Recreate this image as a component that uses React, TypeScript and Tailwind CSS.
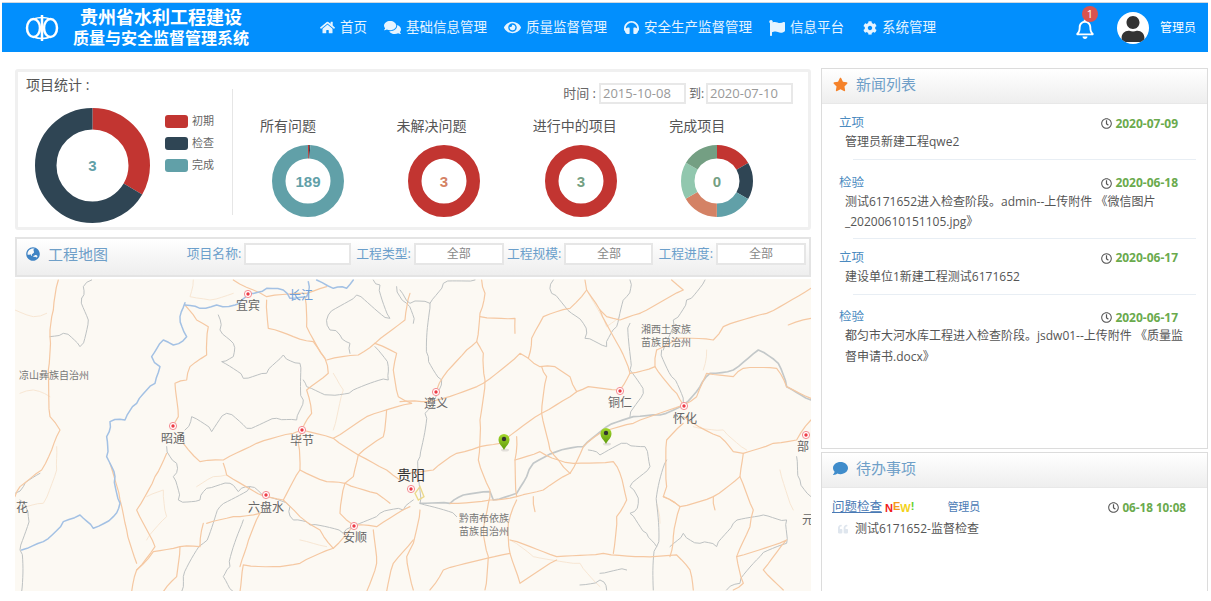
import { FaHome, FaComments, FaEye, FaHeadphones, FaFlag, FaCog, FaRegBell, FaUser, FaStar, FaGlobeAsia, FaComment, FaRegClock, FaQuoteLeft } from 'react-icons/fa';

const C = { red: '#c23531', dark: '#2f4554', teal: '#61a0a8', orange: '#d48265', green: '#91c7ae', moss: '#749f83' };

function Donut({ segments, label, labelColor, size, outer, inner }: { segments: { v: number; c: string }[]; label: string; labelColor: string; size: number; outer: number; inner: number }) {
  const r = (outer + inner) / 2;
  const len = 2 * Math.PI * r;
  const total = segments.reduce((a, s) => a + s.v, 0);
  let acc = 0;
  const c = size / 2;
  return (
    <svg width={size} height={size} viewBox={`0 0 ${size} ${size}`} className="block">
      <g transform={`rotate(-90 ${c} ${c})`}>
        {segments.map((s, i) => {
          const d = (s.v / total) * len;
          const el = <circle key={i} cx={c} cy={c} r={r} fill="none" stroke={s.c} strokeWidth={outer - inner} strokeDasharray={`${d} ${len - d}`} strokeDashoffset={-acc} />;
          acc += d;
          return el;
        })}
      </g>
      <text x={c} y={c + 5.5} textAnchor="middle" fontSize={15} fontWeight="bold" fill={labelColor} fontFamily="'Liberation Sans',sans-serif">{label}</text>
    </svg>
  );
}

const six = [C.red, C.dark, C.teal, C.orange, C.green, C.moss].map((c) => ({ v: 1, c }));
const stats = [
  { title: '所有问题', label: '189', color: C.teal, segs: [{ v: 1, c: C.red }, { v: 1, c: C.dark }, { v: 187, c: C.teal }] },
  { title: '未解决问题', label: '3', color: C.orange, segs: [{ v: 1, c: C.red }] },
  { title: '进行中的项目', label: '3', color: C.moss, segs: [{ v: 1, c: C.red }] },
  { title: '完成项目', label: '0', color: C.moss, segs: six },
];

const legend = [
  { t: '初期', c: 'bg-[#c23531]' },
  { t: '检查', c: 'bg-[#2f4554]' },
  { t: '完成', c: 'bg-[#61a0a8]' },
];

const navs = [
  { icon: <FaHome size={15} />, text: '首页' },
  { icon: <FaComments size={17} />, text: '基础信息管理' },
  { icon: <FaEye size={17} />, text: '质量监督管理' },
  { icon: <FaHeadphones size={15} />, text: '安全生产监督管理' },
  { icon: <FaFlag size={16} />, text: '信息平台' },
  { icon: <FaCog size={14} />, text: '系统管理' },
];

const news = [
  { tag: '立项', date: '2020-07-09', text: '管理员新建工程qwe2', cls: 'pt-[10px] pb-[6px]' },
  { tag: '检验', date: '2020-06-18', text: '测试6171652进入检查阶段。admin--上传附件 《微信图片_20200610151105.jpg》', cls: 'pt-[14px] pb-[5px]' },
  { tag: '立项', date: '2020-06-17', text: '建设单位1新建工程测试6171652', cls: 'pt-[10px] pb-[7px]' },
  { tag: '检验', date: '2020-06-17', text: '都匀市大河水库工程进入检查阶段。jsdw01--上传附件 《质量监督申请书.docx》', cls: 'pt-[13px] pb-[6px]' },
];

// map lines are traced in the coordinates of the two crops (3x)
const leftRoads = [
  '175,150 160,240 150,320 145,420 150,560 180,600 155,660 125,720 60,770 45,800',
  '555,225 590,270 625,290 620,375 570,410 560,450 525,460 535,560 520,585',
  '500,670 465,740 410,840 465,950 410,1020 395,1085',
  '330,700 360,810 380,900 410,1000',
  '800,210 805,295 880,320 940,335 975,385 985,430 920,480 935,550 905,600',
  '915,200 920,290 975,385',
  '700,150 760,180 800,200 920,190 980,170',
  '1125,340 1075,375 980,390',
  '1125,340 1215,270 1230,190',
  '1125,340 1190,370 1180,420 1195,500 1235,520',
  '550,640 600,695 670,690 770,640 880,610 905,600 1000,625 1075,675 1160,720 1200,750',
  '1000,625 1100,560 1235,520',
  '1160,540 1150,620 1075,675 1060,740 1035,760 1020,850 1060,885',
  '1035,760 1130,790 1170,820',
  '670,700 680,735 795,800 850,810 900,720 895,640 905,600',
  '900,720 980,755 1035,760',
  '850,810 900,860 960,900 1000,955 900,1000 820,1010 730,1005 720,1085',
  '780,850 740,950 720,1010',
  '620,880 700,860 780,850',
  '610,880 600,950 540,950 460,965 410,1020',
  '540,950 530,1040 490,1085',
  '1240,930 1180,1000 1160,1085',
  '1000,955 1060,885 1130,890 1230,830',
  '1120,900 1130,1000 1100,1085',
];
const leftPale = [
  '45,240 100,260 140,250', '60,490 100,480 150,500', '170,650 170,720 130,820 80,830',
  '580,150 570,200 630,210 700,190', '590,770 640,740 680,735', '1000,430 1030,480 1000,600',
  '440,800 490,780 500,860 440,930', '900,930 980,950',
];
const leftGray = [
  '655,255 660,300 700,340 700,380 665,395 730,445 800,430 850,375 900,400 910,510 890,570 830,565 740,595 680,550 635,605 575,560 555,600',
  '910,450 920,470 990,495 1060,480 1165,450 1165,410 1125,350',
  '1050,370 1050,340 1020,315 990,300 985,255 1070,195 1170,265 1140,165 1120,150',
  '1190,170 1220,220 1240,280',
  '245,205 265,270 240,350 190,310 150,320',
  '245,205 250,170 275,150',
  '500,650 530,700 520,740 535,810 600,810 620,775 690,760 715,785 750,770 790,800 870,830 880,870 930,885 1030,910 1140,850 1210,840 1240,810',
  '45,790 70,770 120,730',
  '60,810 85,860 60,960 65,1085',
  '750,770 660,830 610,940 550,1040 545,1085',
  '730,870 690,1010 670,1040 700,1085',
];
const leftBlue = [
  '555,218 540,260 560,320 520,345 490,330 455,380 480,410 465,460 410,520 375,570 330,575 320,620 320,680 345,740 360,820 340,860 280,895 240,855 190,875 130,935 65,960',
  '555,225 600,235 650,225 705,225 725,210 745,190 800,175 850,180 870,205 920,200 925,155',
  '950,150 1000,175 1040,175 1060,150',
];
const rightRoads = [
  '245,30 255,70 240,130 230,215 250,250 255,330 240,450 235,570 270,660 265,700 250,780 265,860 255,960',
  '240,140 345,145 345,190',
  '0,395 65,395 130,385 250,340 360,250 385,265 420,290 465,290 510,320 530,365 565,350 660,360 690,310 765,290 830,370 850,405',
  '230,215 200,240 130,320 110,360',
  '385,265 395,205 430,140 510,115 560,60 555,30',
  '560,60 600,120 660,235 690,310',
  '425,290 440,320 425,430 450,540 475,570 510,610',
  '0,610 100,600 170,550 240,530 300,520 425,430 510,380 530,365',
  '350,500 345,570 350,680',
  '345,570 420,545 475,570 520,580 640,575 660,610 680,690 650,740 640,850',
  '510,610 550,530 600,490 700,460 850,405',
  '510,610 430,660 350,680 270,690 150,700',
  '350,690 325,760 330,850 260,865 130,900 90,960',
  '330,810 470,860 610,850 730,860 830,855 870,900 880,960',
  '330,850 360,940 470,870',
  '60,720 40,820 20,860 40,960',
  '720,130 850,60 815,30',
  '720,130 660,150 620,140 600,120',
  '770,240 765,290',
  '770,240 830,205 940,210 970,170 1100,130 1233,55',
  '1165,165 1233,145',
  '850,405 890,380 920,310 1000,320 1030,295 1130,295 1160,350 1233,385',
  '850,460 800,510 800,650 790,680 840,710 820,800 810,860',
  '790,680 840,710 940,680 1020,620 1030,550 1000,545 960,500 880,460 850,440',
  '1030,550 1120,520 1190,510 1233,450',
  '1020,620 1060,720 1050,770 1010,860 1030,940 1000,960',
  '940,680 945,720',
  '1010,860 1160,810 1090,900 1150,960',
  '400,680 405,725',
];
const rightPale = [
  '560,60 620,170 660,140', '330,810 400,860 540,880 600,950', '1140,600 1180,720', '920,240 910,300',
  '770,700 780,760', '880,470 970,480 1040,540',
];
const rightMainRiver = '60,700 150,700 190,675 270,665 280,690 350,670 380,620 400,580 470,545 550,530 620,470 700,440 780,435 850,405 900,350 930,310 1000,300 1075,240 1135,280 1160,350 1233,390';
const rightGray = [
  '90,100 85,260 125,330 75,430 60,560 60,700 170,740',
  '785,240 815,320 850,400',
  '915,30 860,90 820,150 790,240',
  '690,30 680,80 650,170 620,230 555,205 550,160 515,130 455,70 460,30',
  '690,160 690,300 730,370 690,440',
  '565,540 600,555 680,520 735,530 750,590 690,650 715,700 690,730 740,790 770,830 760,960',
  '770,830 770,700 800,570',
  '810,830 850,790 900,820 950,830 1000,760 1090,735 1160,750 1160,820 1080,860 1020,940 980,960',
  '1190,560 1200,630 1233,680',
  '0,60 30,100 90,100 130,40 225,30',
  '600,910 680,900',
  '540,945 600,930 620,960',
];
const cities = [
  [248, 294], [173, 426], [302, 430], [266, 495], [354, 526], [411, 489], [436, 392], [620, 391], [684, 406], [806, 435],
];
const labels = [
  { t: '长江', c: 'left-[286px] top-[17px] text-[12px] text-[#6f9fd8]' },
  { t: '宜宾', c: 'left-[233px] top-[27px] text-[12px] text-[#666]' },
  { t: '凉山彝族自治州', c: 'left-[39px] top-[96px] text-[10px] text-[#777]' },
  { t: '昭通', c: 'left-[158px] top-[160px] text-[12px] text-[#666]' },
  { t: '毕节', c: 'left-[287px] top-[162px] text-[12px] text-[#666]' },
  { t: '六盘水', c: 'left-[251px] top-[229px] text-[12px] text-[#666]' },
  { t: '安顺', c: 'left-[340px] top-[259px] text-[12px] text-[#666]' },
  { t: '花', c: 'left-[7px] top-[229px] text-[12px] text-[#666]' },
  { t: '贵阳', c: 'left-[396px] top-[196px] text-[14px] text-[#333]' },
  { t: '遵义', c: 'left-[421px] top-[125px] text-[12px] text-[#666]' },
  { t: '铜仁', c: 'left-[605px] top-[124px] text-[12px] text-[#666]' },
  { t: '怀化', c: 'left-[670px] top-[140px] text-[12px] text-[#666]' },
  { t: '黔南布依族', c: 'left-[469px] top-[239px] text-[10px] text-[#777]' },
  { t: '苗族自治州', c: 'left-[469px] top-[252px] text-[10px] text-[#777]' },
  { t: '湘西土家族', c: 'left-[651px] top-[50px] text-[10px] text-[#777]' },
  { t: '苗族自治州', c: 'left-[651px] top-[63px] text-[10px] text-[#777]' },
  { t: '部', c: 'left-[788px] top-[168px] text-[12px] text-[#666]' },
  { t: '元', c: 'left-[793px] top-[241px] text-[12px] text-[#666]' },
];

// breaks a traced line into small wobbling pieces so rivers and roads don't look ruled
function wobble(points: string, amp: number, step: number) {
  const pts = points.split(' ').map((p) => p.split(',').map(Number));
  const out: number[][] = [];
  pts.forEach((p, i) => {
    if (i === 0) {
      out.push(p);
      return;
    }
    const q = pts[i - 1];
    const dist = Math.hypot(p[0] - q[0], p[1] - q[1]);
    const n = Math.max(1, Math.round(dist / step));
    for (let k = 1; k <= n; k++) {
      const t = k / n;
      const off = k === n ? 0 : amp * Math.sin((q[0] + k * 37) * 1.7 + (q[1] + k * 11) * 2.3);
      const nx = -(p[1] - q[1]) / (dist || 1);
      const ny = (p[0] - q[0]) / (dist || 1);
      out.push([q[0] + (p[0] - q[0]) * t + nx * off, q[1] + (p[1] - q[1]) * t + ny * off]);
    }
  });
  return out.map((p) => `${p[0].toFixed(1)},${p[1].toFixed(1)}`).join(' ');
}

function Lines({ items, color, width, amp, step }: { items: string[]; color: string; width: number; amp: number; step: number }) {
  return (
    <>
      {items.map((p, i) => (
        <polyline key={i} points={wobble(p, amp, step)} fill="none" stroke={color} strokeWidth={width} strokeLinejoin="round" strokeLinecap="round" />
      ))}
    </>
  );
}

function Pin({ x, y }: { x: number; y: number }) {
  return (
    <g transform={`translate(${x} ${y})`}>
      <ellipse cx="1" cy="9" rx="4" ry="1.5" fill="#000" opacity="0.1" />
      <path d="M0 9 C-2 5 -5.5 3 -5.5 -1.5 A5.5 5.5 0 0 1 5.5 -1.5 C5.5 3 2 5 0 9 Z" fill="url(#pinGreen)" />
      <circle cx="0" cy="-2" r="2.2" fill="#333" />
    </g>
  );
}

function MapCanvas() {
  return (
    <div className="relative mt-[2px] h-[312px] overflow-hidden bg-[#fcf9f3]">
      <svg viewBox="15 279 796 312" className="block h-full w-full">
        <defs>
          <linearGradient id="pinGreen" x1="0" y1="0" x2="0" y2="1">
            <stop offset="0" stopColor="#a4d82c" />
            <stop offset="1" stopColor="#5d9a0c" />
          </linearGradient>
        </defs>
        <g className="blur-[0.35px]">
          <g transform="translate(0 230) scale(0.3333)">
            <Lines items={leftPale} color="#f7e6d3" width={3} amp={3} step={20} />
            <Lines items={leftGray} color="#bdc1c2" width={3} amp={7} step={14} />
            <Lines items={leftRoads} color="#f5c8a2" width={3.6} amp={2.5} step={22} />
            <Lines items={leftBlue} color="#a3c1e4" width={4.5} amp={5} step={16} />
          </g>
          <g transform="translate(400 270) scale(0.3333)">
            <Lines items={rightPale} color="#f7e6d3" width={3} amp={3} step={20} />
            <Lines items={[rightMainRiver]} color="#c3c8c9" width={5} amp={3} step={18} />
            <Lines items={rightGray} color="#bdc1c2" width={3} amp={7} step={14} />
            <Lines items={rightRoads} color="#f5c8a2" width={3.6} amp={2.5} step={22} />
            <path d="M45 670 L60 650 L72 680 L55 690 Z" fill="none" stroke="#ecd98a" strokeWidth="4" />
          </g>
        </g>
        {cities.map(([x, y]) => (
          <g key={`${x}-${y}`}>
            <circle cx={x} cy={y} r="3.6" fill="#fff" stroke="#f58c92" strokeWidth="1" />
            <circle cx={x} cy={y} r="1.7" fill="#ee3a45" />
          </g>
        ))}
        <Pin x={504} y={441} />
        <Pin x={606} y={435} />
      </svg>
      {labels.map((l) => (
        <span key={l.t + l.c} className={`absolute -translate-x-1/2 -translate-y-1/2 whitespace-nowrap leading-none ${l.c}`}>{l.t}</span>
      ))}
    </div>
  );
}

function PanelHead({ icon, title }: { icon: React.ReactNode; title: string }) {
  return (
    <div className="flex h-[35px] items-center gap-[8px] border-b border-[#e8e8e8] bg-linear-to-b from-white to-[#eeeeee] pb-[3px] pl-[11px] text-[15px] text-[#6f9fc8]">
      {icon}
      <span>{title}</span>
    </div>
  );
}

function Field({ label, cls, wrap, value }: { label: string; cls: string; wrap?: string; value?: string }) {
  return (
    <div className={`flex items-center gap-[3px] ${wrap ?? ''}`}>
      <span className="text-[12.8px] text-[#6b9fcb]">{label}</span>
      <div className={`flex h-[22px] shrink-0 items-center justify-center border-2 border-[#e6e6e6] bg-white text-[12px] text-[#888] ${cls}`}>{value}</div>
    </div>
  );
}

export default function App() {
  return (
    <div className="h-[601px] w-[1211px] overflow-hidden bg-white pl-[2px] pr-[3px] pt-[2px] font-['Open_Sans','Noto_Sans_CJK_SC',sans-serif] text-[#555]">
      {/* header */}
      <header className="flex h-[50px] items-center border-t border-[#cfd8e0] bg-[#028ffd] text-white">
        <svg width="34" height="28" viewBox="0 0 34 28" className="ml-[23px] shrink-0" fill="none" stroke="#fff" strokeWidth="2.5">
          <ellipse cx="8.5" cy="14" rx="6.5" ry="9" />
          <ellipse cx="25.5" cy="14" rx="6.5" ry="9" />
          <path d="M8.5 5Q17 2 25.5 5M8.5 23Q17 26 25.5 23" strokeWidth="1.5" />
          <path d="M17 1V27" />
        </svg>
        <div className="ml-[13px] w-[178px] shrink-0 text-center font-bold">
          <div className="text-[18px] leading-[21px]">贵州省水利工程建设</div>
          <div className="text-[16px] leading-[20px]">质量与安全监督管理系统</div>
        </div>
        <nav className="ml-[70px] flex items-center gap-[17px] text-[13.5px] text-white/90">
          {navs.map((n) => (
            <div key={n.text} className="flex items-center gap-[5px] last:ml-[2px]">
              {n.icon}
              <span>{n.text}</span>
            </div>
          ))}
        </nav>
        <div className="ml-auto flex items-center pr-[12px]">
          <div className="relative mr-[22px] mt-[2px]">
            <FaRegBell size={20} />
            <span className="absolute -right-[3px] -top-[13px] flex h-[16px] w-[16px] items-center justify-center rounded-full bg-[#d9534f] text-[11px] leading-none">1</span>
          </div>
          <div className="flex h-[32px] w-[32px] items-center justify-center overflow-hidden rounded-full bg-white text-[#333]">
            <FaUser size={26} className="mt-[3px]" />
          </div>
          <span className="ml-[11px] text-[12px]">管理员</span>
        </div>
      </header>

      <main className="flex h-[539px] overflow-hidden">
        <div className="ml-[13px] flex w-[796px] shrink-0 flex-col pt-[17px]">
          {/* statistics */}
          <section className="flex h-[161px] shrink-0 rounded-[3px] border-[3px] border-[#f0f0f0]">
            <div className="w-[214px] shrink-0 pl-[8px] pt-[3px]">
              <div className="text-[14px] leading-[20px] text-[#555]">项目统计 :</div>
              <div className="ml-[9px] mt-[13px] flex">
                <Donut size={115} outer={57.5} inner={36} label="3" labelColor={C.teal} segments={[{ v: 1, c: C.red }, { v: 2, c: C.dark }]} />
                <div className="ml-[15px] mt-[7px] flex flex-col gap-[9px]">
                  {legend.map((l) => (
                    <div key={l.t} className="flex h-[13px] items-center gap-[4px] text-[11px] text-[#666]">
                      <span className={`h-[13px] w-[23px] rounded-[3px] ${l.c}`} />
                      <span>{l.t}</span>
                    </div>
                  ))}
                </div>
              </div>
            </div>
            <div className="mt-[17px] h-[126px] w-px shrink-0 bg-[#e6e6e6]" />
            <div className="flex-1 pt-[11px]">
              <div className="flex h-[21px] items-center justify-end pr-[15px] text-[12px] text-[#666]">
                <span className="mr-[3px] text-[13px]">时间 :</span>
                <div className="flex h-[21px] w-[87px] items-center border-2 border-[#e8e8e8] pl-[2px] text-[13px] text-[#999]">2015-10-08</div>
                <span className="w-[20px] pl-[3px]">到:</span>
                <div className="flex h-[21px] w-[87px] items-center border-2 border-[#e8e8e8] pl-[2px] text-[13px] text-[#999]">2020-07-10</div>
              </div>
              <div className="mt-[12px] flex pl-[27px]">
                {stats.map((s) => (
                  <div key={s.title} className="w-[136.4px] shrink-0">
                    <div className="text-[14px] leading-[20px] text-[#555]">{s.title}</div>
                    <div className="ml-[12px] mt-[9px]">
                      <Donut size={72} outer={36} inner={22.5} label={s.label} labelColor={s.color} segments={s.segs} />
                    </div>
                  </div>
                ))}
              </div>
            </div>
          </section>

          {/* map toolbar */}
          <section className="mt-[7px] flex h-[40px] shrink-0 items-center border-2 border-[#e4e4e4] bg-linear-to-b from-white to-[#eeeeee] pb-[6px] pl-[9px] pr-[3px]">
            <FaGlobeAsia size={14} className="text-[#3f83c4]" />
            <span className="ml-[8px] text-[15px] text-[#6f9fc8]">工程地图</span>
            <div className="ml-auto flex items-center">
              <Field label="项目名称:" cls="w-[107px]" />
              <Field label="工程类型:" cls="w-[90px]" wrap="ml-[5px]" value="全部" />
              <Field label="工程规模:" cls="w-[89px]" wrap="ml-[3px]" value="全部" />
              <Field label="工程进度:" cls="w-[90px]" wrap="ml-[5px]" value="全部" />
            </div>
          </section>

          <MapCanvas />
        </div>

        <aside className="ml-[10px] flex w-[387px] shrink-0 flex-col pt-[16px]">
          {/* news */}
          <section className="h-[381px] shrink-0 border border-[#dcdcdc]">
            <PanelHead icon={<FaStar size={15} className="text-[#f5822a]" />} title="新闻列表" />
            <div className="pl-[17px] pr-[11px]">
              {news.map((n, i) => (
                <div key={i}>
                  <div className={n.cls}>
                    <div className="flex h-[19px] items-center justify-between pr-[18px] text-[12.5px] text-[#4a8ac0]">
                      <span>{n.tag}</span>
                      <span className="flex items-center gap-[3px] text-[12px] font-bold text-[#6aaa4d]">
                        <FaRegClock size={11} className="text-[#555]" />
                        {n.date}
                      </span>
                    </div>
                    <p className="-mt-[1px] ml-[6px] pr-[6px] text-[12px] leading-[20.5px] text-[#555] [overflow-wrap:anywhere]">{n.text}</p>
                  </div>
                  {i < 3 && <div className="ml-[14px] h-px bg-[#e8eef4]" />}
                </div>
              ))}
            </div>
          </section>

          {/* todo */}
          <section className="mt-[3px] flex-1 border-x border-t border-[#dcdcdc]">
            <PanelHead icon={<FaComment size={15} className="text-[#3f8ccb]" />} title="待办事项" />
            <div className="pl-[10px] pr-[21px] pt-[10px]">
              <div className="flex h-[19px] items-center text-[12.5px]">
                <span className="text-[#4a7ab5] underline">问题检查</span>
                <span className="ml-[3px] flex items-end font-['Liberation_Sans',sans-serif] text-[11px] font-bold leading-none">
                  <span className="text-[#f01a1a]">N</span>
                  <span className="mb-[2px] text-[#f59a1a]">E</span>
                  <span className="text-[#f3d21a]">W</span>
                  <span className="mb-[2px] text-[#5fd02a]">!</span>
                </span>
                <span className="ml-[33px] text-[11px] text-[#4a7ab5]">管理员</span>
                <span className="ml-auto flex items-center gap-[3px] text-[11.7px] font-bold text-[#6aaa4d]">
                  <FaRegClock size={11} className="text-[#555]" />
                  06-18 10:08
                </span>
              </div>
              <div className="mt-[2px] flex h-[20px] items-center pl-[6px] text-[12px] text-[#555]">
                <FaQuoteLeft size={10} className="text-[#dfe6ee]" />
                <span className="ml-[7px]">测试6171652-监督检查</span>
              </div>
            </div>
          </section>
        </aside>
      </main>
    </div>
  );
}
